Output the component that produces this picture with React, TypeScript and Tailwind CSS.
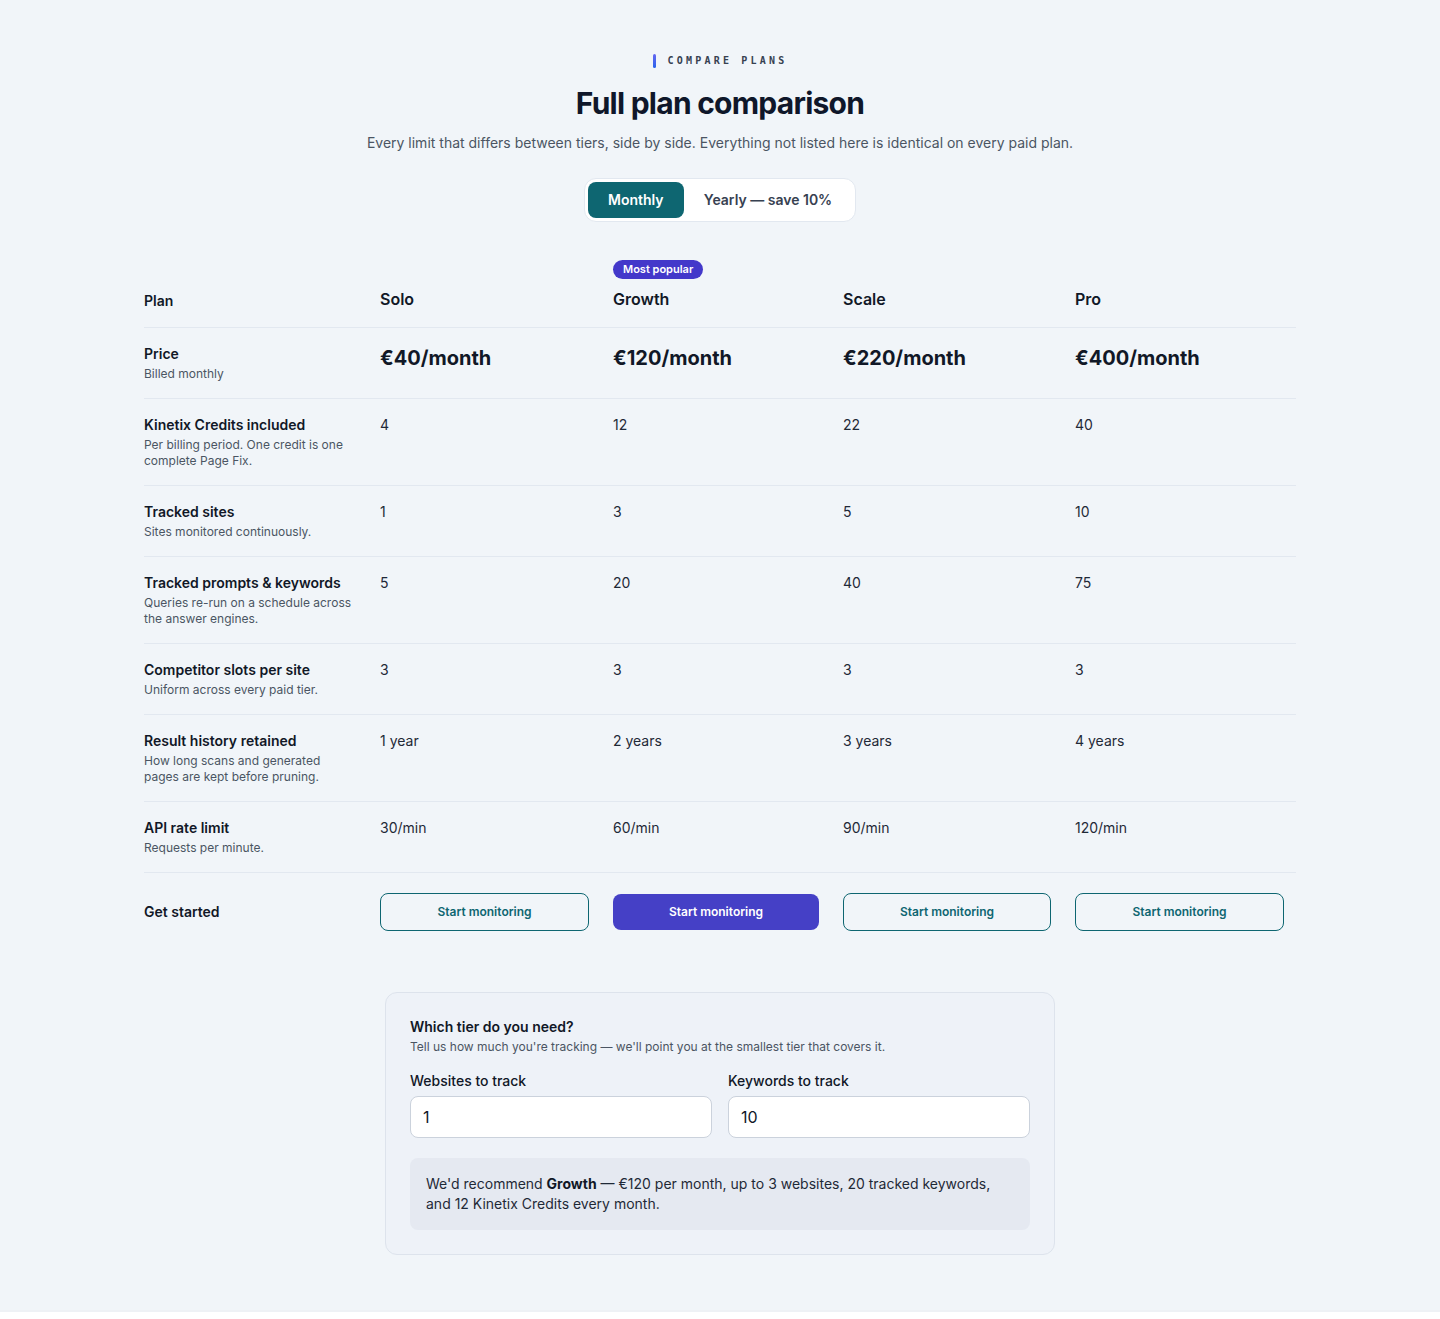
import { useState } from "react";

const tiers = [
  { name: "Solo", price: "€40/month", popular: false },
  { name: "Growth", price: "€120/month", popular: true },
  { name: "Scale", price: "€220/month", popular: false },
  { name: "Pro", price: "€400/month", popular: false },
];

const rows = [
  {
    label: "Kinetix Credits included",
    sub: "Per billing period. One credit is one complete Page Fix.",
    values: ["4", "12", "22", "40"],
  },
  {
    label: "Tracked sites",
    sub: "Sites monitored continuously.",
    values: ["1", "3", "5", "10"],
  },
  {
    label: "Tracked prompts & keywords",
    sub: "Queries re-run on a schedule across the answer engines.",
    values: ["5", "20", "40", "75"],
  },
  {
    label: "Competitor slots per site",
    sub: "Uniform across every paid tier.",
    values: ["3", "3", "3", "3"],
  },
  {
    label: "Result history retained",
    sub: "How long scans and generated pages are kept before pruning.",
    values: ["1 year", "2 years", "3 years", "4 years"],
  },
  {
    label: "API rate limit",
    sub: "Requests per minute.",
    values: ["30/min", "60/min", "90/min", "120/min"],
  },
];

const cols = "grid grid-cols-[236px_233px_230px_232px_221px]";

function LabelCell({ label, sub }: { label: string; sub: string }) {
  return (
    <div className="pr-6">
      <div className="text-sm leading-5 font-semibold text-[#111827]">{label}</div>
      <div className="mt-0.5 text-xs leading-4 text-[#4b5563]">{sub}</div>
    </div>
  );
}

export default function App() {
  const [yearly, setYearly] = useState(false);
  const [sites, setSites] = useState("1");
  const [keywords, setKeywords] = useState("10");

  return (
    <div className="bg-white font-['Inter',sans-serif] text-[#111827]">
      <section className="bg-[#f1f5f9] pt-[53px] pb-[55px] border-b-2 border-[#eef1f5]">
        {/* Heading */}
        <div className="flex flex-col items-center">
          <div className="flex items-center gap-3">
            <span className="w-[3px] h-[14px] rounded-full bg-gradient-to-b from-[#6366f1] to-[#2563eb]" />
            <span className="font-['DejaVu_Sans_Mono',monospace] text-[10px] font-semibold tracking-[0.32em] text-[#374151]">
              COMPARE PLANS
            </span>
          </div>
          <h1 className="mt-[17px] text-[30px] leading-9 font-bold tracking-[-0.025em] text-[#0f172a]">
            Full plan comparison
          </h1>
          <p className="mt-[12px] text-sm leading-5 text-[#4b5563]">
            Every limit that differs between tiers, side by side. Everything not listed here is identical on every paid plan.
          </p>
          <div className="mt-[25px] flex items-center p-[3px] bg-white border border-[#e2e8f0] rounded-xl">
            <button
              onClick={() => setYearly(false)}
              className={`h-9 w-24 rounded-lg text-sm font-semibold ${!yearly ? "bg-[#0e6671] text-white" : "text-[#374151]"}`}
            >
              Monthly
            </button>
            <button
              onClick={() => setYearly(true)}
              className={`h-9 px-5 rounded-lg text-sm font-semibold ${yearly ? "bg-[#0e6671] text-white" : "text-[#374151]"}`}
            >
              Yearly — save 10%
            </button>
          </div>
        </div>

        {/* Table */}
        <div className="mt-[33px] w-[1152px] mx-auto">
          <div className={`${cols} items-end pb-4 border-b border-[#e2e8f0]`}>
            <div className="text-sm leading-5 font-semibold">Plan</div>
            {tiers.map((t) => (
              <div key={t.name}>
                {t.popular && (
                  <span className="inline-block mb-2 px-2.5 h-[19px] leading-[19px] rounded-full bg-[#4338ca] text-white text-[11px] font-semibold">
                    Most popular
                  </span>
                )}
                <div className="text-base leading-6 font-semibold">{t.name}</div>
              </div>
            ))}
          </div>

          <div className={`${cols} pt-4 pb-4 border-b border-[#e2e8f0]`}>
            <LabelCell label="Price" sub="Billed monthly" />
            {tiers.map((t) => (
              <div key={t.name} className="text-xl leading-7 font-bold">
                {t.price}
              </div>
            ))}
          </div>

          {rows.map((r) => (
            <div key={r.label} className={`${cols} pt-4 pb-4 border-b border-[#e2e8f0]`}>
              <LabelCell label={r.label} sub={r.sub} />
              {r.values.map((v, i) => (
                <div key={i} className="text-sm leading-5 text-[#1f2937]">
                  {v}
                </div>
              ))}
            </div>
          ))}

          <div className={`${cols} items-center pt-5 pb-5`}>
            <div className="text-sm font-semibold">Get started</div>
            {tiers.map((t, i) => (
              <div key={t.name} className={i === 3 ? "pr-3" : "pr-6"}>
                {t.popular ? (
                  <button className="w-full h-[36px] rounded-lg bg-[#4540c6] text-white text-xs font-semibold">
                    Start monitoring
                  </button>
                ) : (
                  <button className="w-full h-[38px] rounded-lg border border-[#0e6671] text-[#0e6671] text-xs font-semibold">
                    Start monitoring
                  </button>
                )}
              </div>
            ))}
          </div>
        </div>

        {/* Tier finder */}
        <div className="mt-[41px] w-[670px] mx-auto bg-[#eef2f8] border border-[#dde3ec] rounded-xl px-6 pt-[24px] pb-6">
          <div className="text-sm leading-5 font-semibold">Which tier do you need?</div>
          <div className="mt-[2px] text-xs leading-4 text-[#4b5563]">
            Tell us how much you're tracking — we'll point you at the smallest tier that covers it.
          </div>
          <div className="mt-[16px] grid grid-cols-2 gap-4">
            <label className="block">
              <span className="block text-sm leading-5 font-medium mb-[5px]">Websites to track</span>
              <input
                value={sites}
                onChange={(e) => setSites(e.target.value)}
                className="w-full h-[42px] px-3 bg-white border border-[#cbd2dc] rounded-lg text-base outline-none"
              />
            </label>
            <label className="block">
              <span className="block text-sm leading-5 font-medium mb-[5px]">Keywords to track</span>
              <input
                value={keywords}
                onChange={(e) => setKeywords(e.target.value)}
                className="w-full h-[42px] px-3 bg-white border border-[#cbd2dc] rounded-lg text-base outline-none"
              />
            </label>
          </div>
          <div className="mt-5 bg-[#e5e9f1] rounded-lg px-4 py-4 text-sm leading-5 text-[#1f2937]">
            We'd recommend <span className="font-bold text-[#111827]">Growth</span> — €120 per month, up to 3 websites, 20 tracked keywords, and 12 Kinetix Credits every month.
          </div>
        </div>
      </section>
    </div>
  );
}
